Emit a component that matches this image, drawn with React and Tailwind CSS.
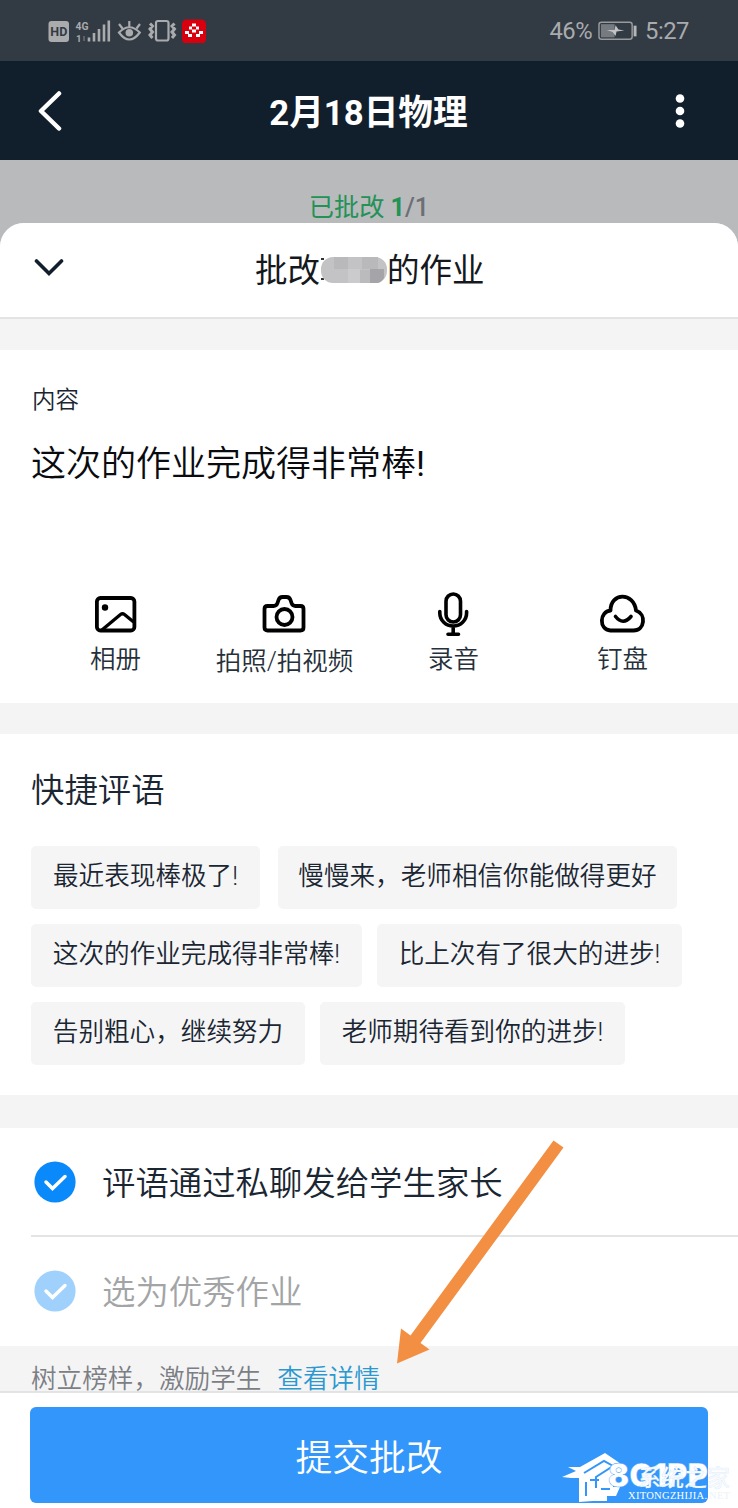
const comments = [
  ['最近表现棒极了!', '慢慢来，老师相信你能做得更好'],
  ['这次的作业完成得非常棒!', '比上次有了很大的进步!'],
  ['告别粗心，继续努力', '老师期待看到你的进步!'],
];

function StatusBar() {
  return (
    <div className="h-[61px] bg-[#323a44] flex items-center justify-between pl-12 pr-[49px] text-[#a9abad]">
      <svg width="160" height="24" viewBox="48 19 160 24" fill="none" stroke="currentColor">
        <rect x="48.5" y="21" width="20.5" height="21" rx="3" fill="currentColor" stroke="none" />
        <text x="58.8" y="36.2" textAnchor="middle" fontSize="12.5" fontWeight="700" fontFamily="Roboto, sans-serif" fill="#323a44" stroke="none">HD</text>
        <text x="75.5" y="29.5" fontSize="11.5" fontWeight="700" textLength="13" lengthAdjust="spacingAndGlyphs" fontFamily="Roboto, sans-serif" fill="currentColor" stroke="none">4G</text>
        <text x="76" y="41.5" fontSize="9.5" fontWeight="700" fontFamily="Roboto, sans-serif" fill="currentColor" stroke="none">1</text>
        <path d="M84 36v5" stroke="#59616a" strokeWidth="2" />
        <path d="M89 37.5v4M94 33v8.500M99 29v12.500M104 24.500v17M108.800 20.500v21" strokeWidth="2.600" />
        <path d="M119 32.500Q129.300 22 139.800 32.500Q129.300 46.500 119 32.500ZM129.300 26.500v-5.500M122.500 28.500l-3.500-4.500M136.500 28.500l3.500-4.500" strokeWidth="2.200" />
        <circle cx="129.300" cy="32.800" r="3.800" fill="currentColor" stroke="none" />
        <rect x="156" y="21" width="12.500" height="19.500" rx="2" strokeWidth="2.200" />
        <path d="M150 23.500l2.500 2.500-2.500 3 2.500 3-2.500 3 2.500 3M174.500 23.500l-2.500 2.500 2.500 3-2.500 3 2.500 3-2.500 3" strokeWidth="3" />
        <rect x="182" y="19.500" width="24" height="24" rx="4.500" fill="#d8000f" stroke="none" />
        <path
          d="M192 23.500h4v3h-4zM189 26.500h3v3h-3zM196 26.500h3v3h-3zM192 29.500h4v3h-4zM185 31h4v3h-4zM199 31h4v3h-4zM188 34h4v3h-4zM196 34h4v3h-4z"
          fill="white" stroke="none"
        />
      </svg>
      <div className="flex items-center font-[Roboto,sans-serif] font-normal text-[23.8px] leading-none pt-[2px]">
        <span className="tracking-[-0.5px]">46%</span>
        <svg className="ml-[6px] mr-[7px] mb-px" width="40" height="20" viewBox="0 0 41 20" fill="none">
          <rect x="1" y="1" width="34" height="17.500" rx="2.500" stroke="#989a9c" strokeWidth="1.500" />
          <path d="M3 3h14v13.500H3z" fill="#757b81" />
          <path d="M9 9l8 0 1-5 3 4.500 6 1-8 1-1 4.500-3-4z" fill="#c0c2c4" />
          <path d="M38 4.500v11" stroke="#b4b6b7" strokeWidth="3" />
        </svg>
        <span className="tracking-[-0.5px]">5:27</span>
      </div>
    </div>
  );
}

function Tool({ label, low, children }) {
  return (
    <div className="flex flex-col items-center">
      <svg width="48" height="48" viewBox="0 0 48 48" fill="none" stroke="black" strokeWidth="3.800" strokeLinecap="round" strokeLinejoin="round">
        {children}
      </svg>
      <span className={`text-[25.5px] leading-10 whitespace-nowrap text-[#26303a] ${low ? 'mt-[3px]' : 'mt-px'}`}>{label}</span>
    </div>
  );
}

function Check({ className }) {
  return (
    <svg className={className} width="42" height="42" viewBox="0 0 42 42" fill="none">
      <circle cx="21" cy="21" r="20.600" fill="currentColor" />
      <path d="M12 21l6.500 6.500 12.500-12" stroke="white" strokeWidth="3.500" strokeLinecap="round" />
    </svg>
  );
}

function Watermark() {
  return (
    <svg className="absolute left-[560px] top-[1448px]" width="178" height="60" viewBox="560 1448 178 60">
      <path d="M562 1477l14-6-8-4h12l25-14 19 13-2 7-9 5v9h7l-4 9h-9v5h-14l-14 1v-24h-8z" fill="white" />
      <path d="M584 1473l20-12 9 5-17 11v11M586 1482v14M590 1480h9M601 1489h9" stroke="#3296fa" strokeWidth="2" fill="none" />
      <text x="608" y="1487" fontSize="33" fontWeight="900" textLength="100" lengthAdjust="spacingAndGlyphs" fontFamily="Inter, sans-serif" fill="white" stroke="#3296fa" strokeWidth="0.400">8G1PP</text>
      <text x="638" y="1486" fontSize="23" fontWeight="500" textLength="92" fontFamily="Noto Sans CJK SC, sans-serif" fill="#f7fafd" stroke="#9fcdfb" strokeOpacity="0.300" strokeWidth="0.500">系统之家</text>
      <text x="628" y="1498.500" fontSize="10.500" textLength="79" fontFamily="Liberation Serif, serif" fill="white">XITONGZHIJIA.</text>
      <text x="709" y="1498.500" fontSize="10.500" textLength="21" fontFamily="Liberation Serif, serif" fill="#edf3f8">NET</text>
    </svg>
  );
}

export default function App() {
  return (
    <div className="relative w-[738px] h-[1508px] overflow-hidden flex flex-col bg-[#b9babc] font-[Roboto,'Noto_Sans_CJK_SC',sans-serif] font-[350] text-[#1a2632]">
      <StatusBar />
      <header className="h-[99px] bg-[#111e2c] flex items-center justify-between pl-[38px] pr-[53px] text-white">
        <svg width="24" height="40" viewBox="0 0 24 40" fill="none">
          <path d="M21 2.500L3 20l18 17.500" stroke="white" strokeWidth="4.500" strokeLinecap="round" strokeLinejoin="round" />
        </svg>
        <h1 className="mt-[5px] text-[34.7px] font-bold leading-none">2月18日物理</h1>
        <svg width="10" height="36" viewBox="0 0 10 36" fill="white">
          <circle cx="5" cy="5.500" r="4.300" />
          <circle cx="5" cy="18" r="4.300" />
          <circle cx="5" cy="30.500" r="4.300" />
        </svg>
      </header>
      <div className="h-[63px] pt-[28px] text-center text-[25.2px] leading-10 text-[#6c6f75]">
        <span className="font-normal text-[#229256]">已批改 <b>1</b></span>
        <span className="font-medium">/1</span>
      </div>

      <main className="flex-1 flex flex-col bg-[#f4f4f4] rounded-t-[24px] overflow-hidden">
        <div className="h-[96px] shrink-0 bg-white border-b-2 border-[#e3e3e4] flex items-center">
          <svg className="ml-[34px] mb-[4px]" width="30" height="20" viewBox="0 0 30 20" fill="none">
            <path d="M2.500 3L15 15.500 27.500 3" stroke="#111e2c" strokeWidth="3.600" strokeLinecap="round" />
          </svg>
          <h2 className="ml-[191px] mt-[3px] flex items-center text-[32.5px] font-normal leading-none text-[#15191e]">
            批改
            <svg className="mb-[3px]" width="67" height="28" viewBox="0 0 67 28">
              <path d="M1 2h3v2H1zM1 22h3v2H1z" fill="#333" />
              <rect x="1" y="1" width="66" height="26" rx="12" fill="#c3c3c5" />
              <path d="M14 1h14v12H14zM42 1h16v12H42z" fill="#b9b9bc" />
              <path d="M28 13h12v14H28z" fill="#cbcbcd" />
              <path d="M50 13h14v9q-2 4-6 5h-8z" fill="#a5a5a9" />
              <path d="M40 14h10v13H40z" fill="#bbbbbe" />
            </svg>
            的作业
          </h2>
        </div>

        <section className="mt-[31px] h-[353px] shrink-0 bg-white pt-[34px]">
          <div className="ml-8 text-[23.5px] leading-8">内容</div>
          <div className="ml-[31px] mt-[24px] text-[35px] leading-[50px] text-[#090b0e]">
            这次的作业完成得非常棒<span className="font-normal">!</span>
          </div>
          <div className="mt-[100px] mx-[31px] grid grid-cols-4">
            <Tool label="相册">
              <rect x="4.900" y="8" width="37.500" height="32.500" rx="3.500" />
              <circle cx="13" cy="17.500" r="3.200" fill="black" stroke="none" />
              <path d="M10.500 39.500L28.500 24.500q2-1.500 4 0l8.500 7" strokeWidth="3.300" />
            </Tool>
            <Tool label="拍照/拍视频" low>
              <path d="M6.500 16h6q3 0 4-3l1-3q1-3 4-3h4q3 0 4 3l1 3q1 3 4 3h5q3 0 3 3V37.500q0 3-3 3H6.500q-3 0-3-3V19q0-3 3-3z" />
              <circle cx="23.500" cy="27" r="8" />
            </Tool>
            <Tool label="录音">
              <rect x="16" y="4" width="14.500" height="28" rx="7.250" strokeWidth="3.600" />
              <path d="M9.800 21.500v1.500a13.400 13 0 0 0 26.800 0v-1.500M23.200 36v8M18 44.300h10.500" strokeWidth="3.600" />
            </Tool>
            <Tool label="钉盘">
              <path d="M11.500 40.500C-.5 39.500 .5 21.500 11.500 20.500C11.500 2 35 2 37 20.500C47.500 24 46 40.500 34.500 40.500Z" />
              <path d="M16.500 26.500q7.500 9.500 15.500 0" strokeWidth="3.600" />
            </Tool>
          </div>
        </section>

        <section className="mt-[31px] h-[361px] shrink-0 bg-white pt-[34px] pl-[31px]">
          <h3 className="text-[33.4px] leading-[46px]">快捷评语</h3>
          <div className="mt-[32px] flex flex-col gap-[15px]">
            {comments.map(([first, second], i) => (
              <div key={first} className={`flex ${i === 0 ? 'gap-[18px]' : 'gap-[15px]'}`}>
                <div className={`h-[63px] rounded-[5px] bg-[#f5f5f6] flex items-center justify-center pb-[2px] text-[25.6px] whitespace-nowrap ${['w-[229px]', 'w-[331px]', 'w-[274px]'][i]}`}>{first}</div>
                <div className={`h-[63px] rounded-[5px] bg-[#f5f5f6] flex items-center justify-center pb-[2px] text-[25.6px] whitespace-nowrap ${['w-[399px]', 'w-[305px]', 'w-[305px]'][i]}`}>{second}</div>
              </div>
            ))}
          </div>
        </section>

        <section className="mt-[33px] h-[218px] shrink-0 bg-white pl-[31px]">
          <div className="h-[109px] flex items-center border-b-2 border-[#e4e4e5] pl-[3px]">
            <Check className="text-[#0a89fa]" />
            <span className="ml-[26px] mt-[6px] text-[33.4px]">评语通过私聊发给学生家长</span>
          </div>
          <div className="h-[109px] flex items-center pl-[3px]">
            <Check className="mb-[2px] text-[#9fd1fc]" />
            <span className="ml-[26px] mt-[4px] text-[33.4px] text-[#a2a4a6]">选为优秀作业</span>
          </div>
        </section>

        <div className="h-[45px] shrink-0 pl-[31px] pt-[22px] text-[25.6px] leading-[23px] text-[#7b7e84]">
          树立榜样，激励学生<span className="ml-4 text-[#2b98d0]">查看详情</span>
        </div>
        <footer className="flex-1 bg-white border-t-2 border-[#e2e3e4] pt-[14px] pl-[30px]">
          <button className="block w-[678px] h-[96px] rounded-[6px] bg-[#3296fa] pt-[7px] text-white text-[36.8px]">提交批改</button>
        </footer>
      </main>

      <svg className="absolute left-[390px] top-[1135px]" width="180" height="235" viewBox="390 1135 180 235">
        <path d="M553.500 1140.500l10 7L420.500 1343l9 6.500-32.500 14 4-35 9.500 7z" fill="#f28f43" />
      </svg>
      <Watermark />
    </div>
  );
}
